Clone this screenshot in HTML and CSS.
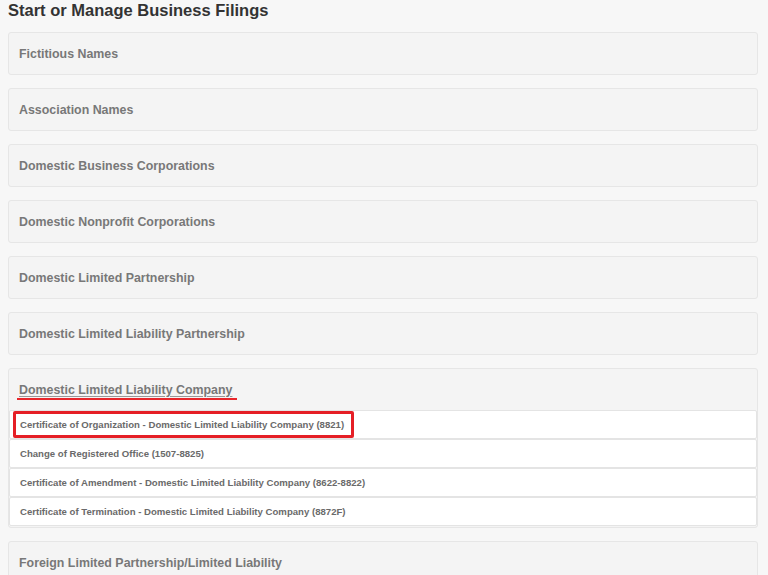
FILE: index.html
```html
<!DOCTYPE html>
<html>
<head>
<meta charset="utf-8">
<link rel="stylesheet" href="styles.css">
</head>
<body>
<h1 class="title">Start or Manage Business Filings</h1>
<div class="panels">
  <div class="panel"><div class="panel-head">Fictitious Names</div></div>
  <div class="panel"><div class="panel-head">Association Names</div></div>
  <div class="panel"><div class="panel-head">Domestic Business Corporations</div></div>
  <div class="panel"><div class="panel-head">Domestic Nonprofit Corporations</div></div>
  <div class="panel"><div class="panel-head">Domestic Limited Partnership</div></div>
  <div class="panel"><div class="panel-head">Domestic Limited Liability Partnership</div></div>
  <div class="panel open">
    <div class="panel-head"><span class="head-link">Domestic Limited Liability Company<span class="red-line"></span></span></div>
    <ul class="list">
      <li class="item highlighted">Certificate of Organization - Domestic Limited Liability Company (8821)<span class="red-box"></span></li>
      <li class="item">Change of Registered Office (1507-8825)</li>
      <li class="item">Certificate of Amendment - Domestic Limited Liability Company (8622-8822)</li>
      <li class="item">Certificate of Termination - Domestic Limited Liability Company (8872F)</li>
    </ul>
  </div>
  <div class="panel"><div class="panel-head">Foreign Limited Partnership/Limited Liability</div></div>
</div>
</body>
</html>
```
FILE: styles.css
```css
html, body {
  margin: 0;
  padding: 0;
  background: #f7f7f7;
  overflow: hidden;
}
body {
  padding: 0 10px 0 8px;
  font-family: "Liberation Sans", Arial, sans-serif;
}
.title {
  margin: 0;
  font-size: 16.5px;
  line-height: 20px;
  font-weight: bold;
  color: #333333;
  height: 32px;
}
.panels {
  display: flex;
  flex-direction: column;
  gap: 13px;
}
.panel {
  background: #f4f4f4;
  border: 1px solid #e6e6e6;
  border-radius: 3px;
}
.panel-head {
  height: 41px;
  display: flex;
  align-items: center;
  padding-left: 10px;
  font-size: 12.4px;
  font-weight: bold;
  color: #787878;
}
.head-link {
  position: relative;
  text-decoration: underline;
  text-decoration-color: #999999;
  text-underline-offset: 2px;
}
.red-line {
  position: absolute;
  left: -2px;
  right: -5px;
  bottom: -3px;
  height: 2px;
  background: #e8262b;
}
.list {
  list-style: none;
  margin: 0;
  padding: 0;
  background: #f4f4f4;
}
.item {
  position: relative;
  height: 27px;
  display: flex;
  align-items: center;
  padding-left: 10px;
  background: #ffffff;
  border: 1px solid #e4e4e4;
  border-radius: 2px;
  font-size: 9.6px;
  font-weight: bold;
  color: #6a6a6a;
}
.open {
  padding-bottom: 1px;
}
.red-box {
  position: absolute;
  left: 3px;
  top: 0;
  width: 335px;
  height: 21px;
  border: 3px solid #e51f26;
  border-radius: 2px;
}
```
